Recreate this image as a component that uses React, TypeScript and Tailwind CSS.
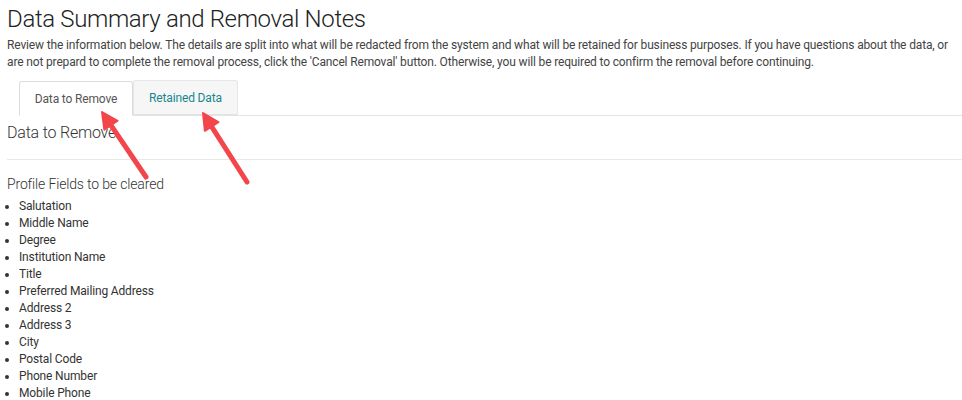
const fields = [
  'Salutation',
  'Middle Name',
  'Degree',
  'Institution Name',
  'Title',
  'Preferred Mailing Address',
  'Address 2',
  'Address 3',
  'City',
  'Postal Code',
  'Phone Number',
  'Mobile Phone',
];

function Arrow({ x1, y1, x2, y2 }: { x1: number; y1: number; x2: number; y2: number }) {
  // x1,y1 = tail, x2,y2 = tip
  const dx = x2 - x1;
  const dy = y2 - y1;
  const len = Math.hypot(dx, dy);
  const ux = dx / len;
  const uy = dy / len;
  const head = 16;
  const half = 8;
  const bx = x2 - ux * head;
  const by = y2 - uy * head;
  const p1 = `${bx - uy * half},${by + ux * half}`;
  const p2 = `${bx + uy * half},${by - ux * half}`;
  return (
    <g>
      <line x1={x1} y1={y1} x2={bx + ux * 2} y2={by + uy * 2} stroke="#f2464b" strokeWidth={5} strokeLinecap="round" />
      <polygon points={`${x2},${y2} ${p1} ${p2}`} fill="#f2464b" stroke="#f2464b" strokeWidth={2} strokeLinejoin="round" />
    </g>
  );
}

export default function App() {
  return (
    <div className="relative w-[962px] h-[400px] overflow-hidden bg-white font-['Roboto',sans-serif] text-[#333]">
      <div className="pl-[7px] pt-[4px]">
        <h1 className="text-[24px] font-light leading-[30px] tracking-[-0.35px] text-[#222]">Data Summary and Removal Notes</h1>
        <p className="mt-[3px] text-[12px] leading-[17px] tracking-[-0.15px] text-[#444] pr-[4px]">
          Review the information below. The details are split into what will be redacted from the system and what will be retained for business purposes. If you have questions about the data, or are not prepard to complete the removal process, click the 'Cancel Removal' button. Otherwise, you will be required to confirm the removal before continuing.
        </p>

        {/* Tabs */}
        <ul className="mt-[10px] ml-[12px] flex border-b border-[#e3e3e3] h-[35px] tracking-[-0.15px]">
          <li className="-mb-px h-[35px] w-[114px] flex items-center justify-center bg-white border border-[#dcdcdc] border-b-white rounded-t-[3px] text-[12px] text-[#555]">
            Data to Remove
          </li>
          <li className="-mb-px mt-[-1px] h-[35px] w-[105px] flex items-center justify-center bg-[#f6f6f6] border border-[#e6e6e6] border-b-[#e3e3e3] rounded-t-[3px] text-[12px] text-[#18868c]">
            Retained Data
          </li>
        </ul>

        <h3 className="mt-[7px] text-[16px] font-light leading-[20px] tracking-[-0.2px] text-[#333]">Data to Remove</h3>
        <hr className="mt-[16px] border-t border-[#e8e8e8]" />
        <h4 className="mt-[16px] text-[14px] font-light leading-[17px] tracking-[-0.15px] text-[#333]">Profile Fields to be cleared</h4>
        <ul className="mt-[5px] list-disc pl-[12px] text-[12px] leading-[17px] tracking-[-0.15px] text-[#333]">
          {fields.map((f) => (
            <li key={f}>{f}</li>
          ))}
        </ul>
      </div>

      <svg className="absolute inset-0 pointer-events-none" width={962} height={400}>
        <Arrow x1={146} y1={177} x2={102} y2={112} />
        <Arrow x1={247} y1={182} x2={203} y2={113} />
      </svg>
    </div>
  );
}
